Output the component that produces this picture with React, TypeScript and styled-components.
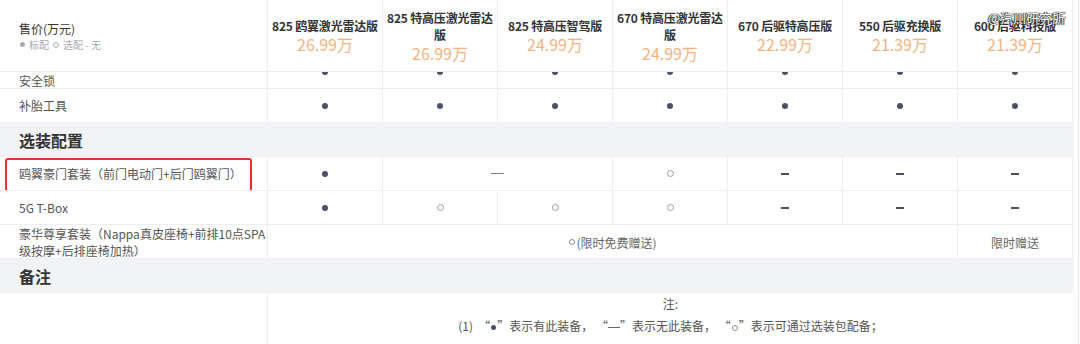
import React from "react";
import styled, { createGlobalStyle } from "styled-components";

const GlobalStyle = createGlobalStyle`
  html, body {
    margin: 0;
    padding: 0;
    background: #fff;
  }
  body {
    font-family: "Noto Sans CJK SC", "Noto Sans", sans-serif;
    color: #333;
  }
`;

const COLS = "268px repeat(7, 115px)";
const LINE = "#eceef1";

const Page = styled.div`
  display: flex;
  width: 1080px;
  height: 344px;
  overflow: hidden;
`;

const Table = styled.div`
  width: 1073px;
  display: flex;
  flex-direction: column;
`;

const Gutter = styled.div`
  width: 5px;
  border-right: 1px solid #e4e6ea;
`;

const HeaderRow = styled.div`
  display: grid;
  grid-template-columns: ${COLS};
  height: 72px;
  border-bottom: 1px solid ${LINE};
  box-sizing: border-box;
`;

const HeadLabel = styled.div`
  display: flex;
  flex-direction: column;
  justify-content: center;
  padding-left: 19px;
  border-right: 1px solid ${LINE};
  font-size: 12px;
  line-height: 17px;
  color: #333;
`;

const Legend = styled.div`
  display: flex;
  align-items: center;
  gap: 3px;
  font-size: 10px;
  line-height: 14px;
  color: #a8abb2;
  margin-top: 1px;
`;

const HeadCell = styled.div`
  position: relative;
  display: flex;
  flex-direction: column;
  align-items: center;
  justify-content: center;
  text-align: center;
  border-right: 1px solid ${LINE};
`;

const ModelName = styled.div`
  font-size: 12px;
  font-weight: 700;
  line-height: 17px;
  color: #333;
  white-space: nowrap;
  letter-spacing: -0.2px;
`;

const Price = styled.div`
  font-size: 16px;
  line-height: 20px;
  color: #f2b482;
`;

const Watermark = styled.span`
  position: absolute;
  left: 30px;
  top: 9px;
  font-size: 13px;
  line-height: 17px;
  color: #fff;
  white-space: nowrap;
  text-shadow: 0 0 1px #222, 0 0 1px #222, 1px 0 1px #333, -1px 0 1px #333;
`;

const Row = styled.div<{ $partial?: boolean }>`
  display: grid;
  grid-template-columns: ${COLS};
  height: ${(p) => (p.$partial ? "17px" : "34px")};
  overflow: hidden;
  border-bottom: 1px solid ${LINE};
  box-sizing: border-box;
`;

const Label = styled.div`
  position: relative;
  display: flex;
  flex-direction: column;
  justify-content: center;
  padding: 0 0 0 19px;
  border-right: 1px solid ${LINE};
  font-size: 12px;
  line-height: 17px;
  color: #555;
  white-space: nowrap;
`;

const Cell = styled.div<{ $span?: number; $top?: boolean }>`
  grid-column: span ${(p) => p.$span || 1};
  display: flex;
  justify-content: center;
  align-items: ${(p) => (p.$top ? "flex-start" : "center")};
  border-right: 1px solid ${LINE};
  font-size: 12px;
  color: #666;
`;

const Dot = styled.span<{ $clip?: boolean }>`
  width: 6px;
  height: 6px;
  border-radius: 50%;
  background: #4a5068;
  margin-top: ${(p) => (p.$clip ? "-3px" : "0")};
`;

const Ring = styled.span`
  width: 5px;
  height: 5px;
  border-radius: 50%;
  border: 1px solid #9a9ea6;
`;

const ShortDash = styled.span`
  width: 8px;
  height: 2px;
  background: #4a5068;
`;

const LongDash = styled.span`
  width: 13px;
  height: 1.5px;
  background: #7d828c;
`;

/* small inline marks inside running text */
const TinyDot = styled.span<{ $c?: string }>`
  display: inline-block;
  width: 5px;
  height: 5px;
  border-radius: 50%;
  background: ${(p) => p.$c || "#4a5068"};
  vertical-align: middle;
  margin: 0 1px;
`;

const TinyRing = styled.span<{ $c?: string }>`
  display: inline-block;
  width: 4px;
  height: 4px;
  border-radius: 50%;
  border: 1px solid ${(p) => p.$c || "#8a8e96"};
  vertical-align: middle;
  margin: 0 1px;
`;

const TinyDash = styled.span`
  display: inline-block;
  width: 12px;
  height: 1px;
  background: #666;
  vertical-align: middle;
`;

const Section = styled.div`
  height: 34px;
  display: flex;
  align-items: center;
  padding-left: 19px;
  background: #f2f3f5;
  font-size: 16px;
  font-weight: 700;
  color: #333;
  border-bottom: 1px solid ${LINE};
  box-sizing: border-box;
`;

const Highlight = styled.div`
  position: absolute;
  left: 5px;
  top: 1px;
  width: 247px;
  height: 34px;
  border: 2px solid #e8322e;
  border-radius: 3px;
  box-sizing: border-box;
  pointer-events: none;
`;

const NoteRow = styled.div`
  display: grid;
  grid-template-columns: ${COLS};
  flex: 1;
`;

const NoteCell = styled.div`
  grid-column: span 7;
  text-align: center;
  font-size: 12px;
  line-height: 22px;
  color: #555;
`;

const models = [
  { name: ["825 鸥翼激光雷达版"], price: "26.99万" },
  { name: ["825 特高压激光雷达", "版"], price: "26.99万" },
  { name: ["825 特高压智驾版"], price: "24.99万" },
  { name: ["670 特高压激光雷达", "版"], price: "24.99万" },
  { name: ["670 后驱特高压版"], price: "22.99万" },
  { name: ["550 后驱充换版"], price: "21.39万" },
  { name: ["600 后驱科技版"], price: "21.39万" },
];

type Mark = "dot" | "ring" | "dash";

const markFor = (m: Mark) =>
  m === "dot" ? <Dot /> : m === "ring" ? <Ring /> : <ShortDash />;

const Marks = ({ list }: { list: Mark[] }) => (
  <>
    {list.map((m, i) => (
      <Cell key={i}>{markFor(m)}</Cell>
    ))}
  </>
);

export default function App() {
  return (
    <>
      <GlobalStyle />
      <Page>
        <Table>
          <HeaderRow>
            <HeadLabel>
              <div>售价(万元)</div>
              <Legend>
                <TinyDot $c="#a8abb2" /> 标配 <TinyRing $c="#a8abb2" /> 选配 - 无
              </Legend>
            </HeadLabel>
            {models.map((m, i) => (
              <HeadCell key={m.name.join("")}>
                {m.name.map((line) => (
                  <ModelName key={line}>{line}</ModelName>
                ))}
                <Price>{m.price}</Price>
                {i === 6 && <Watermark>@汽川研究所</Watermark>}
              </HeadCell>
            ))}
          </HeaderRow>

          <Row $partial>
            <Label>安全锁</Label>
            {models.map((m, i) => (
              <Cell key={i} $top>
                <Dot $clip />
              </Cell>
            ))}
          </Row>
          <Row>
            <Label>补胎工具</Label>
            <Marks list={["dot", "dot", "dot", "dot", "dot", "dot", "dot"]} />
          </Row>

          <Section>选装配置</Section>

          <Row>
            <Label>
              鸥翼豪门套装（前门电动门+后门鸥翼门）
              <Highlight />
            </Label>
            <Cell>
              <Dot />
            </Cell>
            <Cell $span={2}>
              <LongDash />
            </Cell>
            <Marks list={["ring", "dash", "dash", "dash"]} />
          </Row>
          <Row>
            <Label>5G T-Box</Label>
            <Marks list={["dot", "ring", "ring", "ring", "dash", "dash", "dash"]} />
          </Row>
          <Row>
            <Label>
              <div>豪华尊享套装（Nappa真皮座椅+前排10点SPA</div>
              <div>级按摩+后排座椅加热）</div>
            </Label>
            <Cell $span={6}>
              <TinyRing />
              (限时免费赠送)
            </Cell>
            <Cell>限时赠送</Cell>
          </Row>

          <Section>备注</Section>

          <NoteRow>
            <Label />
            <NoteCell>
              <div>注:</div>
              <div>
                (1)&nbsp;&nbsp;“<TinyDot />”表示有此装备，&nbsp;“<TinyDash />”表示无此装备，&nbsp;“<TinyRing />”表示可通过选装包配备；
              </div>
            </NoteCell>
          </NoteRow>
        </Table>
        <Gutter />
      </Page>
    </>
  );
}
